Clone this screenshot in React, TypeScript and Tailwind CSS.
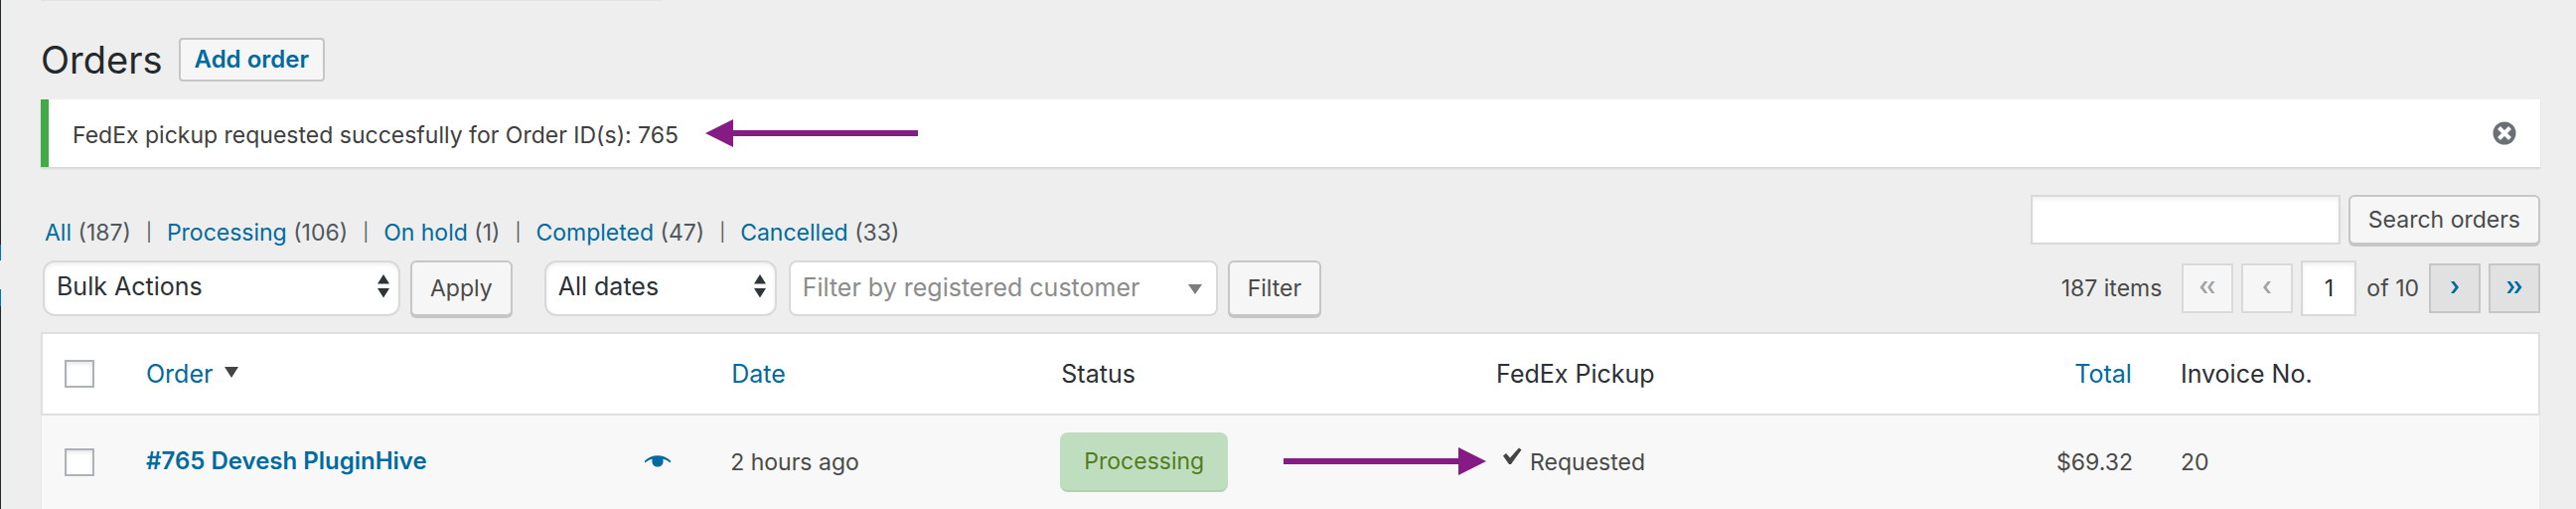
import { useState } from "react";

interface View {
    label: string;
    count: number;
}

interface Order {
    id: number;
    customer: string;
    date: string;
    status: string;
    pickup: string;
    total: string;
    invoice: number;
}

const views: View[] = [
    { label: "All", count: 187 },
    { label: "Processing", count: 106 },
    { label: "On hold", count: 1 },
    { label: "Completed", count: 47 },
    { label: "Cancelled", count: 33 },
];

const orders: Order[] = [
    { id: 765, customer: "Devesh PluginHive", date: "2 hours ago", status: "Processing", pickup: "Requested", total: "$69.32", invoice: 20 },
];

const buttonClass = "shrink-0 rounded-md border-2 border-[#c6c6c6] bg-[#f6f6f6] px-[18px] text-[23px] text-[#4a4a4a] shadow-[0_2px_0_#c6c6c6]";
const inputClass = "border-2 border-[#d9d9d9] bg-white shadow-[inset_0_2px_4px_rgba(0,0,0,0.07)]";
const selectClass = "h-14 w-full appearance-none border-2 border-[#d9d9d9] bg-white pl-3 text-[25px]";
const pageClass = "h-[50px] w-[52px] shrink-0 border-2 flex items-center justify-center";

const UpDown = () => (
    <svg viewBox="0 0 12 24" className="pointer-events-none absolute top-[14px] right-[11px] h-6 w-3" fill="#2f3439">
        <path d="M6 0 L12 9.500 H0 Z M0 14 H12 L6 23.500 Z" />
    </svg>
);

const Chevron = ({ double, flip }: { double?: boolean; flip?: boolean }) => (
    <svg viewBox="0 0 16 14" className={flip ? "mb-0.5 h-[14px] w-4 rotate-180" : "mb-0.5 h-[14px] w-4"} fill="currentColor">
        {double
            ? <path d="M0.500 1 H3.700 L8 7 L3.700 13 H0.500 L4.800 7 Z M7.700 1 H10.900 L15.500 7 L10.900 13 H7.700 L12 7 Z" />
            : <path d="M4 1 H7.300 L12 7 L7.300 13 H4 L8.500 7 Z" />}
    </svg>
);

const Notice = ({ onDismiss }: { onDismiss: () => void }) => (
    <div className="mt-[18px] flex h-[68px] items-center border-l-8 border-[#42ab48] bg-white pr-6 pl-6 shadow-[0_2px_2px_rgba(0,0,0,0.1)]">
        <p className="pt-1 text-[23px] text-[#404040]">FedEx pickup requested succesfully for Order ID(s): 765</p>
        <svg viewBox="0 0 214 28" className="ml-[27px] h-7 w-[214px]" fill="#861b85">
            <path d="M0 14 L28 0 V11 H214 V17 H28 V28 Z" />
        </svg>
        <button onClick={onDismiss} aria-label="Dismiss this notice" className="ml-auto">
            <svg viewBox="0 0 24 24" className="h-6 w-6">
                <circle cx="12" cy="12" r="11.500" fill="#6b7075" />
                <path d="M6.500 6.500 L17.500 17.500 M17.500 6.500 L6.500 17.500" stroke="#fff" strokeWidth="4" />
            </svg>
        </button>
    </div>
);

const App = () => {
    const [showNotice, setShowNotice] = useState(true);
    const [selected, setSelected] = useState<number[]>([]);
    const allSelected = selected.length === orders.length;

    const toggleAll = () => setSelected(allSelected ? [] : orders.map(o => o.id));
    const toggle = (id: number) => setSelected(prev => prev.includes(id) ? prev.filter(i => i !== id) : [...prev, id]);

    const checkboxClass = "block h-7 w-[30px] appearance-none border-2 border-[#adb2b8] bg-white shadow-[inset_0_2px_4px_rgba(0,0,0,0.1)] checked:bg-[#006ba1]";

    return (
        <div className="flex min-h-screen bg-[#eeeeee] font-['Inter',sans-serif] text-[#2c3137]">
            {/* Edge of the admin menu */}
            <div className="flex w-px shrink-0 flex-col">
                <div className="h-[246px] bg-[#23282d]" />
                <div className="h-4 bg-[#0073aa]" />
                <div className="h-[29px]" />
                <div className="h-[17px] bg-[#0073aa]" />
                <div className="grow bg-[#23282d]" />
            </div>

            <main className="min-w-0 grow pr-9 pl-10">
                <div className="h-px w-[625px] bg-[#e4e4e4]" />
                <div className="mt-[37px] flex items-center gap-4">
                    <h1 className="text-[38px] leading-[44px] text-[#23282d]">Orders</h1>
                    <a href="#add" className="flex h-11 items-center rounded border-2 border-[#c6c6c6] bg-[#f6f6f6] px-[14px] text-2xl font-semibold text-[#006ba1]">Add order</a>
                </div>

                {showNotice && <Notice onDismiss={() => setShowNotice(false)} />}

                <div className="mt-7 flex items-start justify-between">
                    <ul className="mt-[22px] ml-1 flex text-[23px] leading-8">
                        {views.map((view, i) => (
                            <li key={view.label} className="flex text-[#50575e]">
                                <span><a href={"#" + view.label} className="text-[#006ba1]">{view.label}</a> ({view.count})</span>
                                {i < views.length - 1 && <span className="mx-[15px] text-lg leading-8">|</span>}
                            </li>
                        ))}
                    </ul>
                    <form className="flex gap-2">
                        <input type="search" aria-label="Search orders" className={`h-[50px] w-[312px] px-3 text-[23px] ${inputClass}`} />
                        <button type="button" className={`h-[50px] ${buttonClass}`}>Search orders</button>
                    </form>
                </div>

                <div className="mt-3 flex items-center justify-between">
                    <div className="ml-0.5 flex">
                        <div className="relative w-[360px]">
                            <select aria-label="Bulk actions" className={`rounded-xl pb-0.5 shadow-[inset_0_2px_4px_rgba(0,0,0,0.07)] ${selectClass}`}>
                                <option>Bulk Actions</option>
                            </select>
                            <UpDown />
                        </div>
                        <button className={`ml-[10px] h-14 ${buttonClass}`}>Apply</button>
                        <div className="relative ml-8 w-[234px]">
                            <select aria-label="Filter by date" className={`rounded-xl pb-0.5 shadow-[inset_0_2px_4px_rgba(0,0,0,0.07)] ${selectClass}`}>
                                <option>All dates</option>
                            </select>
                            <UpDown />
                        </div>
                        <div className="relative ml-3 w-[432px]">
                            <select aria-label="Filter by registered customer" className={`rounded-lg text-[#8c8c8c] ${selectClass}`}>
                                <option>Filter by registered customer</option>
                            </select>
                            <svg viewBox="0 0 14 10" className="pointer-events-none absolute top-6 right-4 h-[10px] w-[14px]" fill="#7d7d7d">
                                <path d="M0 0 H14 L7 10 Z" />
                            </svg>
                        </div>
                        <button className={`ml-[10px] h-14 ${buttonClass}`}>Filter</button>
                    </div>

                    <div className="flex items-center gap-2 text-[23px] text-[#4a4a4a]">
                        <span className="mr-3">187 items</span>
                        <button disabled aria-label="First page" className={`border-[#d9d9d9] bg-[#f6f6f6] text-[#a0a5aa] ${pageClass}`}><Chevron double flip /></button>
                        <button disabled aria-label="Previous page" className={`border-[#d9d9d9] bg-[#f6f6f6] text-[#a0a5aa] ${pageClass}`}><Chevron flip /></button>
                        <input aria-label="Current page" defaultValue="1" className={`h-14 w-14 text-center text-[#2c3137] ${inputClass}`} />
                        <span className="px-0.5">of 10</span>
                        <button aria-label="Next page" className={`border-[#c6c6c6] bg-[#e1e1e1] text-[#006ba1] ${pageClass}`}><Chevron /></button>
                        <button aria-label="Last page" className={`border-[#c6c6c6] bg-[#e1e1e1] text-[#006ba1] ${pageClass}`}><Chevron double /></button>
                    </div>
                </div>

                <table className="mt-4 w-full table-fixed border-separate border-spacing-0 text-left text-[23px] leading-8">
                    <thead>
                        <tr className="bg-white text-[25px] *:h-[84px] *:border-y-2 *:border-[#dfdfdf] *:font-normal">
                            <th className="w-[88px] border-l-2 pl-[22px]">
                                <input type="checkbox" aria-label="Select all" checked={allSelected} onChange={toggleAll} className={checkboxClass} />
                            </th>
                            <th className="w-[23.3%] px-[18px]">
                                <a href="#order" className="flex items-center gap-3 text-[#006ba1]">
                                    Order
                                    <svg viewBox="0 0 14 11" className="mb-1 h-[11px] w-[14px]" fill="#444">
                                        <path d="M0 0 H14 L7 11 Z" />
                                    </svg>
                                </a>
                            </th>
                            <th className="w-[13.2%] px-[21px]"><a href="#date" className="text-[#006ba1]">Date</a></th>
                            <th className="w-[17.4%] px-[21px]">Status</th>
                            <th className="w-[17.6%] px-[21px]">FedEx Pickup</th>
                            <th className="w-[9.5%] px-[21px] text-right"><a href="#total" className="text-[#006ba1]">Total</a></th>
                            <th className="border-r-2 pl-7">Invoice No.</th>
                        </tr>
                    </thead>
                    <tbody>
                        {orders.map(order => (
                            <tr key={order.id} className="bg-[#f8f8f8] text-[#4a4a4a] *:h-[94px]">
                                <td className="border-l border-[#e8e8e8] pl-[23px]">
                                    <input type="checkbox" aria-label={`Select order ${order.id}`} checked={selected.includes(order.id)} onChange={() => toggle(order.id)} className={checkboxClass} />
                                </td>
                                <td className="px-[18px]">
                                    <div className="flex items-center justify-between pr-[22px] pb-0.5">
                                        <a href="#765" className="text-2xl font-semibold text-[#006ba1]">#{order.id} {order.customer}</a>
                                        <button aria-label="Preview" className="text-[#006ba1]">
                                            <svg viewBox="0 0 26 12" className="h-3 w-[26px]" fill="currentColor">
                                                <path d="M0 5.500 C7 -1.500 19 -1.500 26 5.500 V7.500 C23 5.500 21 4.500 18.300 3.800 C19.500 8 17 11.500 13 11.500 C9 11.500 6.500 8 7.700 3.800 C5 4.500 3 5.500 0 7.500 Z" />
                                            </svg>
                                        </button>
                                    </div>
                                </td>
                                <td className="px-5">{order.date}</td>
                                <td className="px-5">
                                    <span className="inline-flex h-[60px] items-center rounded-lg border-b-2 border-[#b3d0b3] bg-[#bfddbf] px-6 text-[#527d1c]">{order.status}</span>
                                </td>
                                <td className="relative px-5">
                                    <svg viewBox="0 0 204 28" className="absolute top-8 right-full -mr-[11px] h-7 w-[204px]" fill="#861b85">
                                        <path d="M0 11 H176 V0 L204 14 L176 28 V17 H0 Z" />
                                    </svg>
                                    <div className="flex items-center gap-2 pl-2">
                                        <svg viewBox="0 0 19 18" className="mb-3 h-[18px] w-[19px]" fill="#444">
                                            <path d="M16 0.500 L18.500 2.500 L8 17 H6 L0 8.500 L3 6 L7 10.500 Z" />
                                        </svg>
                                        {order.pickup}
                                    </div>
                                </td>
                                <td className="px-5 text-right">{order.total}</td>
                                <td className="border-r border-[#e8e8e8] pl-7">{order.invoice}</td>
                            </tr>
                        ))}
                    </tbody>
                </table>
            </main>
        </div>
    );
};

export default App;
